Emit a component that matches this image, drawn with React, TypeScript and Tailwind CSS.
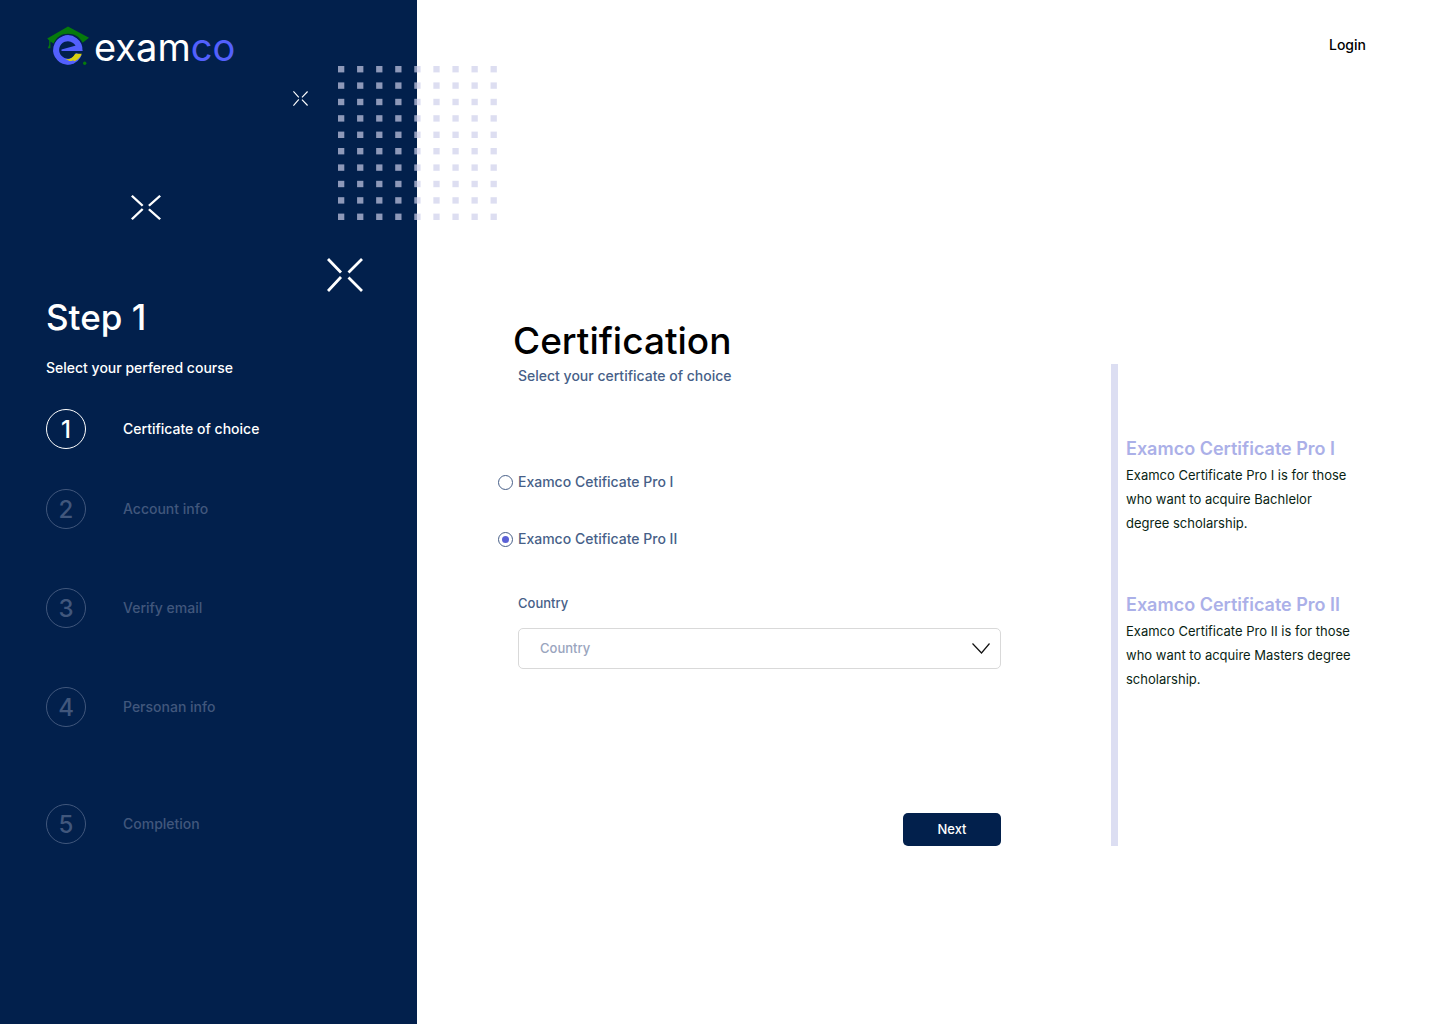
import { useState } from "react";

type Step = { label: string; gap: string };

const steps: Step[] = [
  { label: "Certificate of choice", gap: "" },
  { label: "Account info", gap: "mt-10" },
  { label: "Verify email", gap: "mt-[59px]" },
  { label: "Personan info", gap: "mt-[59px]" },
  { label: "Completion", gap: "mt-[77px]" },
];

const certificates = [
  {
    title: "Examco Certificate Pro I",
    text: "Examco Certificate Pro I is for those who want to acquire Bachlelor degree scholarship.",
  },
  {
    title: "Examco Certificate Pro II",
    text: "Examco Certificate Pro II is for those who want to acquire Masters degree scholarship.",
  },
];

const options = ["Examco Cetificate Pro I", "Examco Cetificate Pro II"];

function LogoMark() {
  return (
    <svg viewBox="0 0 44 42" className="h-[42px] w-11 shrink-0" aria-hidden="true">
      <path
        d="M22 1.6 1.2 13.6l2 1.9v4.2l-1.4 3.6h2.6V16.6l3.2 2C10.5 12 15.5 8.8 22 8.800s11.700 3.200 14.600 9L43 12.800Z"
        fill="#067a0c"
      />
      <path
        d="M33.500 25.800A11.700 11.700 0 1 0 32.800 29"
        fill="none"
        stroke="#5360fd"
        strokeWidth="6"
      />
      <path d="M15.500 24.400 30 20.600 36.800 26H15.500Z" fill="#5360fd" />
      <path d="M19 34C23 35.200 27 33.200 29.200 28.800H35.800C33.500 35 28 37.600 23.500 36Z" fill="#d8cf10" />
      <path d="M14 31c3 5 9 6.200 13.500 4.200l.8 3C22 40.800 15 39 11 34Z" fill="#5360fd" />
      <circle cx="38.700" cy="38.300" r="1.700" fill="#067a0c" />
    </svg>
  );
}

function Spark({ className }: { className: string }) {
  return (
    <svg viewBox="0 0 36 34" preserveAspectRatio="none" className={className} aria-hidden="true">
      <path
        d="M1 1 14 14.500M35 1 21.500 14.500M1 33 14 19M35 33 21.500 19.500"
        fill="none"
        stroke="#fff"
        strokeWidth="2.800"
      />
    </svg>
  );
}

function DotGrid() {
  const cols = Array.from({ length: 9 }, (_, i) => i);
  const rows = Array.from({ length: 10 }, (_, i) => i);
  return (
    <svg
      viewBox="0 0 160 154"
      className="pointer-events-none absolute left-[338px] top-[66px] h-[154px] w-40"
      aria-hidden="true"
    >
      {rows.map((r) =>
        cols.map((c) => (
          <rect
            key={`${r}-${c}`}
            x={c * 19.07}
            y={r * 16.4}
            width="6.300"
            height="6.400"
            fill="#cecfeb"
            fillOpacity="0.69"
          />
        )),
      )}
    </svg>
  );
}

function Sidebar() {
  return (
    <aside className="relative w-[417px] shrink-0 bg-[#02204c] pl-[46px] pt-[25px] text-white">
      <a href="#home" className="flex items-start" aria-label="examco">
        <LogoMark />
        <span className="ml-1 text-[38px] font-normal leading-[44px]">
          exam<span className="text-[#5360fd]">co</span>
        </span>
      </a>
      <Spark className="absolute left-[293px] top-[91px] h-[15px] w-[15px]" />
      <Spark className="absolute left-[131px] top-[195px] h-[25px] w-[30px]" />
      <Spark className="absolute left-[327px] top-[258px] h-[34px] w-9" />

      <h2 className="mt-56 text-[35px] font-medium leading-[48px]">Step 1</h2>
      <p className="mt-[15px] text-[14px] font-medium leading-6">Select your perfered course</p>

      <ol className="mt-[29px]">
        {steps.map((step, i) => (
          <li
            key={step.label}
            className={`flex items-center gap-[37px] ${step.gap} ${i === 0 ? "text-white" : "text-[#41577c]"}`}
          >
            <span className="flex size-10 items-center justify-center rounded-full border border-current pt-0.5 text-[24px] font-medium">
              {i + 1}
            </span>
            <span className="text-[14px] font-medium leading-6">{step.label}</span>
          </li>
        ))}
      </ol>
    </aside>
  );
}

function CertificationForm() {
  const [choice, setChoice] = useState(1);
  return (
    <form className="flex min-w-0 flex-1 flex-col" onSubmit={(e) => e.preventDefault()}>
      <h1 className="pl-[15px] text-[37px] font-medium leading-[46px] text-black">Certification</h1>
      <p className="pl-5 text-[14px] font-medium leading-6 text-[#475f88]">
        Select your certificate of choice
      </p>

      <fieldset className="mt-[82px] flex flex-col gap-[33px]" aria-label="Certificate">
        {options.map((option, i) => (
          <label
            key={option}
            className="flex items-center gap-[5px] text-[14px] font-medium leading-6 text-[#475f88]"
          >
            <input
              type="radio"
              name="certificate"
              checked={choice === i}
              onChange={() => setChoice(i)}
              className="grid size-[15px] appearance-none place-items-center rounded-full border border-[#475f88] before:size-[7px] before:rounded-full checked:before:bg-[#5a61d6]"
            />
            {option}
          </label>
        ))}
      </fieldset>

      <div className="mt-10 pl-5">
        <label htmlFor="country" className="block text-[13px] font-medium leading-6 text-[#475f88]">
          Country
        </label>
        <div className="relative mt-[13px]">
          <select
            id="country"
            className="h-[41px] w-full appearance-none rounded-[5px] border border-[#d9d9d9] bg-white pl-[21px] pr-10 text-[13px] font-medium text-[#9aa5be]"
          >
            <option>Country</option>
          </select>
          <svg
            viewBox="0 0 18 11"
            className="pointer-events-none absolute right-[11px] top-[15px] h-[11px] w-[18px]"
            aria-hidden="true"
          >
            <path d="M.5.5 9.500 10 17.500.5" fill="none" stroke="#111" strokeWidth="1.200" />
          </svg>
        </div>
      </div>

      <button
        type="submit"
        className="mt-36 h-[33px] w-[98px] self-end rounded-[5px] bg-[#02204c] text-[13px] font-medium text-white"
      >
        Next
      </button>
    </form>
  );
}

export default function App() {
  return (
    <div className="relative flex min-h-screen bg-white font-['Inter',sans-serif]">
      <Sidebar />
      <main className="min-w-0 flex-1 pb-16 pl-[81px] pr-[74px] pt-[33px]">
        <header className="flex justify-end">
          <a href="#login" className="text-[14px] font-medium leading-6 text-black">
            Login
          </a>
        </header>
        <div className="mt-[261px] flex gap-[110px]">
          <CertificationForm />
          <section className="mt-[46px] w-[255px] shrink-0 border-l-[7px] border-[#dcdef2] pl-2 pt-[71px]">
            {certificates.map((item) => (
              <article key={item.title} className="mb-14 last:mb-0">
                <h3 className="whitespace-nowrap text-[18px] font-semibold leading-7 text-[#abb0e8]">
                  {item.title}
                </h3>
                <p className="pr-2.5 text-[13px] leading-6 text-[#0a1f14]">{item.text}</p>
              </article>
            ))}
          </section>
        </div>
      </main>
      <DotGrid />
    </div>
  );
}
